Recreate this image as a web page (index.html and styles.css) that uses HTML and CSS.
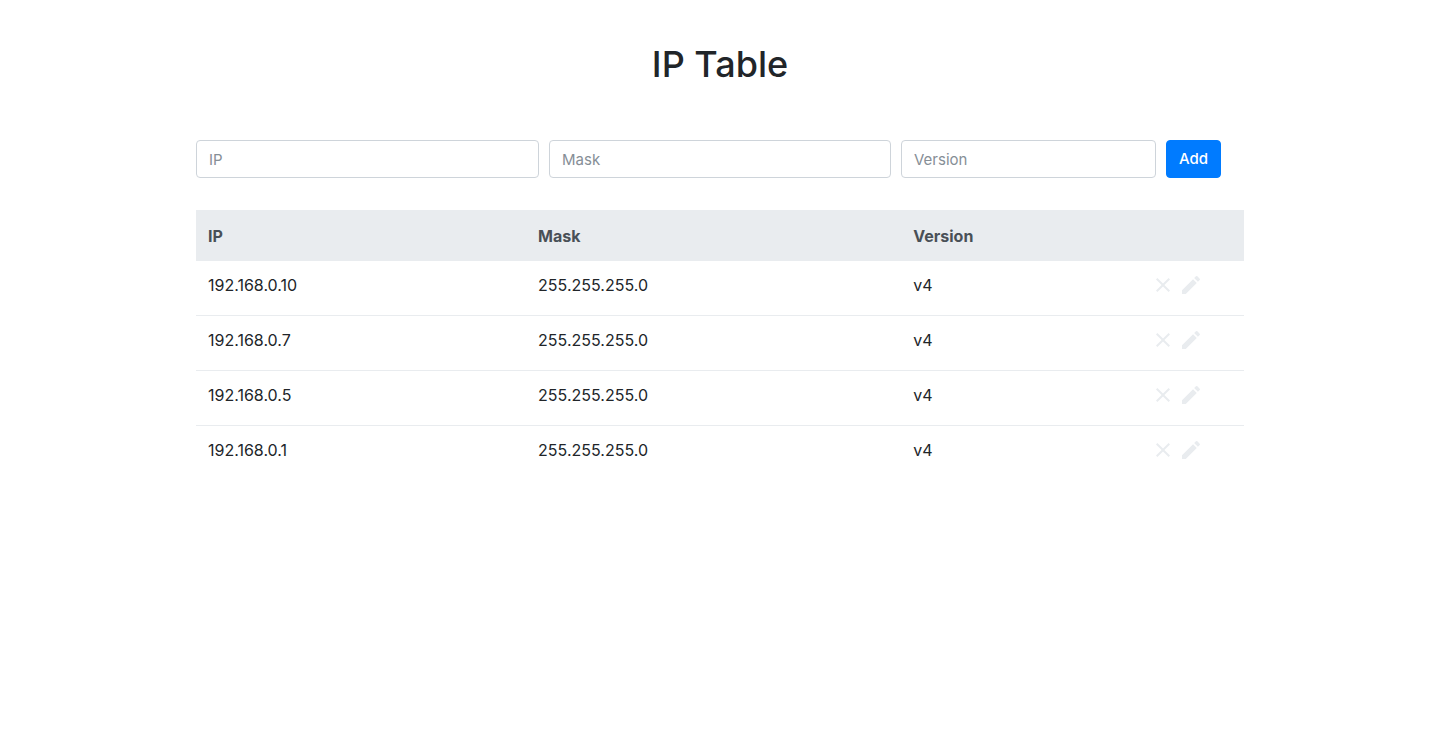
FILE: index.html
```html
<!DOCTYPE html>
<html lang="en">
<head>
<meta charset="utf-8">
<meta name="viewport" content="width=device-width, initial-scale=1">
<title>IP Table</title>
<link rel="stylesheet" href="styles.css">
</head>
<body>
<svg class="sprite" aria-hidden="true">
  <symbol id="close" viewBox="0 0 24 24"><path d="M19 6.41 17.59 5 12 10.59 6.41 5 5 6.41 10.59 12 5 17.59 6.41 19 12 13.41 17.59 19 19 17.59 13.41 12z"/></symbol>
  <symbol id="edit" viewBox="0 0 24 24"><path d="M3 17.25V21h3.75L17.81 9.94l-3.75-3.75L3 17.25zM20.71 7.04a1 1 0 0 0 0-1.41l-2.34-2.34a1 1 0 0 0-1.41 0l-1.83 1.83 3.75 3.75 1.83-1.83z"/></symbol>
</svg>
<main class="page">
  <h1 class="title">IP Table</h1>
  <form class="entry">
    <input class="field" type="text" placeholder="IP" aria-label="IP">
    <input class="field" type="text" placeholder="Mask" aria-label="Mask">
    <input class="field" type="text" placeholder="Version" aria-label="Version">
    <button class="add" type="button">Add</button>
  </form>
  <table class="table">
    <colgroup><col class="col-ip"><col class="col-mask"><col class="col-version"><col></colgroup>
    <thead>
      <tr><th scope="col">IP</th><th scope="col">Mask</th><th scope="col">Version</th><td></td></tr>
    </thead>
    <tbody>
      <tr><td>192.168.0.10</td><td>255.255.255.0</td><td>v4</td><td><div class="actions"><button class="icon" type="button" aria-label="Delete"><svg><use href="#close"/></svg></button><button class="icon" type="button" aria-label="Edit"><svg><use href="#edit"/></svg></button></div></td></tr>
      <tr><td>192.168.0.7</td><td>255.255.255.0</td><td>v4</td><td><div class="actions"><button class="icon" type="button" aria-label="Delete"><svg><use href="#close"/></svg></button><button class="icon" type="button" aria-label="Edit"><svg><use href="#edit"/></svg></button></div></td></tr>
      <tr><td>192.168.0.5</td><td>255.255.255.0</td><td>v4</td><td><div class="actions"><button class="icon" type="button" aria-label="Delete"><svg><use href="#close"/></svg></button><button class="icon" type="button" aria-label="Edit"><svg><use href="#edit"/></svg></button></div></td></tr>
      <tr><td>192.168.0.1</td><td>255.255.255.0</td><td>v4</td><td><div class="actions"><button class="icon" type="button" aria-label="Delete"><svg><use href="#close"/></svg></button><button class="icon" type="button" aria-label="Edit"><svg><use href="#edit"/></svg></button></div></td></tr>
    </tbody>
  </table>
</main>
</body>
</html>
```
FILE: styles.css
```css
*, *::before, *::after { box-sizing: border-box; }

body {
  margin: 0;
  background: #fff;
  color: #212529;
  font: 400 15px/24px Inter, Roboto, sans-serif;
}

.sprite { display: none; }

.page {
  max-width: 1080px;
  margin: 0 auto;
  padding: 40px 16px;
}

.title {
  margin: 0 0 52px;
  font-size: 36px;
  font-weight: 500;
  line-height: 48px;
  text-align: center;
}

.entry {
  display: grid;
  grid-template-columns: 343fr 342fr 255fr 78fr;
  gap: 10px;
  margin-bottom: 32px;
}

.field {
  width: 100%;
  height: 38px;
  padding: 6px 12px;
  border: 1px solid #ced4da;
  border-radius: 4px;
  background: #fff;
  color: #495057;
  font: inherit;
}

.field::placeholder { color: #868e96; opacity: 1; }

.add {
  justify-self: start;
  padding: 6px 12px;
  border: 1px solid #007bff;
  border-radius: 4px;
  background: #007bff;
  color: #fff;
  font: inherit;
  font-weight: 500;
}

.table {
  width: 100%;
  border-spacing: 0;
  table-layout: fixed;
  font-size: 16px;
}

.col-ip { width: 31.5%; }
.col-mask { width: 35.8%; }
.col-version { width: 23%; }

th, td {
  padding: 12px;
  text-align: left;
  vertical-align: top;
}

thead th, thead td {
  height: 51px;
  background: #e9ecef;
  color: #495057;
  font-weight: 700;
  vertical-align: middle;
}

tbody td {
  height: 55px;
  border-bottom: 1px solid #e9ecef;
}

tbody tr:last-child td { border-bottom: 0; }

tbody td:last-child { padding: 12px 9px; }

.actions { display: flex; gap: 4px; }

.icon {
  width: 24px;
  height: 24px;
  padding: 0;
  border: 0;
  background: none;
  color: #e9ecef;
  cursor: pointer;
}

.icon svg {
  display: block;
  width: 24px;
  height: 24px;
  fill: currentColor;
}
```
